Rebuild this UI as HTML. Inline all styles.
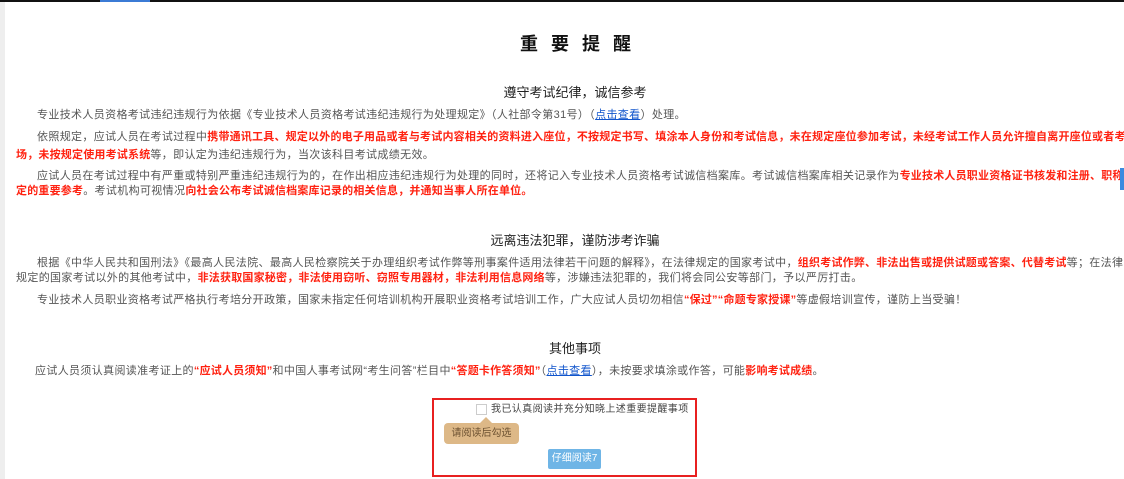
<!DOCTYPE html>
<html><head><meta charset="utf-8"><style>
*{margin:0;padding:0;box-sizing:border-box}
html,body{width:1124px;height:479px;overflow:hidden}
body{background:#fff;position:relative;font-family:"Liberation Sans","Noto Sans CJK SC",sans-serif;color:#555}
#w{position:absolute;left:0;top:0;width:1124px;height:479px;overflow:hidden}
.topbar{position:absolute;left:0;top:0;width:1124px;height:2px;background:#111}
.tb2{position:absolute;left:100px;top:0;width:50px;height:2px;background:#3b7bd5}
.lb{position:absolute;left:0;top:2px;width:5px;height:477px;background:#eee}
.l{position:absolute;white-space:nowrap;font-size:11px;letter-spacing:0.35px;line-height:14px}
.r{color:#f21;font-weight:bold;letter-spacing:0.2px}
a{color:#15c;text-decoration:underline}
.h{position:absolute;left:13px;width:1124px;text-align:center;color:#222;font-size:13px;white-space:nowrap}
</style></head><body><div id="w">
<div class="topbar"></div><div class="tb2"></div><div class="lb"></div>
<div class="h" style="top:30px;left:20px;font-size:18px;font-weight:bold;letter-spacing:13px;color:#111">重要提醒</div>
<div class="h" style="top:82px">遵守考试纪律，诚信参考</div>
<div class="l" style="left:37px;top:108px">专业技术人员资格考试违纪违规行为依据《专业技术人员资格考试违纪违规行为处理规定》（人社部令第31号）（<a>点击查看</a>）处理。</div>
<div class="l" style="left:37px;top:130px">依照规定，应试人员在考试过程中<span class="r">携带通讯工具、规定以外的电子用品或者与考试内容相关的资料进入座位，不按规定书写、填涂本人身份和考试信息，未在规定座位参加考试，未经考试工作人员允许擅自离开座位或者考</span></div>
<div class="l" style="left:16px;top:148px"><span class="r">场，未按规定使用考试系统</span>等，即认定为违纪违规行为，当次该科目考试成绩无效。</div>
<div class="l" style="left:37px;top:169px">应试人员在考试过程中有严重或特别严重违纪违规行为的，在作出相应违纪违规行为处理的同时，还将记入专业技术人员资格考试诚信档案库。考试诚信档案库相关记录作为<span class="r">专业技术人员职业资格证书核发和注册、职称评</span></div>
<div class="l" style="left:16px;top:184px"><span class="r">定的重要参考</span>。考试机构可视情况<span class="r">向社会公布考试诚信档案库记录的相关信息，并通知当事人所在单位。</span></div>
<div class="h" style="top:230px">远离违法犯罪，谨防涉考诈骗</div>
<div class="l" style="left:37px;top:256px">根据《中华人民共和国刑法》《最高人民法院、最高人民检察院关于办理组织考试作弊等刑事案件适用法律若干问题的解释》，在法律规定的国家考试中，<span class="r">组织考试作弊、非法出售或提供试题或答案、代替考试</span>等；在法律</div>
<div class="l" style="left:16px;top:271px">规定的国家考试以外的其他考试中，<span class="r">非法获取国家秘密，非法使用窃听、窃照专用器材，非法利用信息网络</span>等，涉嫌违法犯罪的，我们将会同公安等部门，予以严厉打击。</div>
<div class="l" style="left:37px;top:293px">专业技术人员职业资格考试严格执行考培分开政策，国家未指定任何培训机构开展职业资格考试培训工作，广大应试人员切勿相信<span class="r">“保过”“命题专家授课”</span>等虚假培训宣传，谨防上当受骗！</div>
<div class="h" style="top:338px">其他事项</div>
<div class="l" style="left:35px;top:364px">应试人员须认真阅读准考证上的<span class="r">“应试人员须知”</span>和中国人事考试网“考生问答”栏目中<span class="r">“答题卡作答须知”</span>（<a>点击查看</a>），未按要求填涂或作答，可能<span class="r">影响考试成绩</span>。</div>
<div style="position:absolute;left:432px;top:398px;width:265px;height:79px;border:2px solid #e82020"></div>
<div style="position:absolute;left:476px;top:404px;width:11px;height:11px;border:1px solid #ccc;background:#fff"></div>
<div class="l" style="left:491px;top:403px;font-size:10px;letter-spacing:0.4px;color:#444">我已认真阅读并充分知晓上述重要提醒事项</div>
<div style="position:absolute;left:480px;top:417px;width:0;height:0;border:6px solid transparent;border-bottom-color:#ddb887;border-top:0"></div>
<div style="position:absolute;left:444px;top:423px;width:75px;height:21px;background:#ddb887;border-radius:4px;color:#6b5030;font-size:10px;line-height:21px;text-align:center">请阅读后勾选</div>
<div style="position:absolute;left:548px;top:449px;width:53px;height:20px;background:#6fb5e6;border-radius:2px;color:#fff;font-size:10px;line-height:20px;text-align:center">仔细阅读7</div>
<div style="position:absolute;left:1120px;top:168px;width:4px;height:22px;background:#3b8be0"></div>
</div></body></html>
